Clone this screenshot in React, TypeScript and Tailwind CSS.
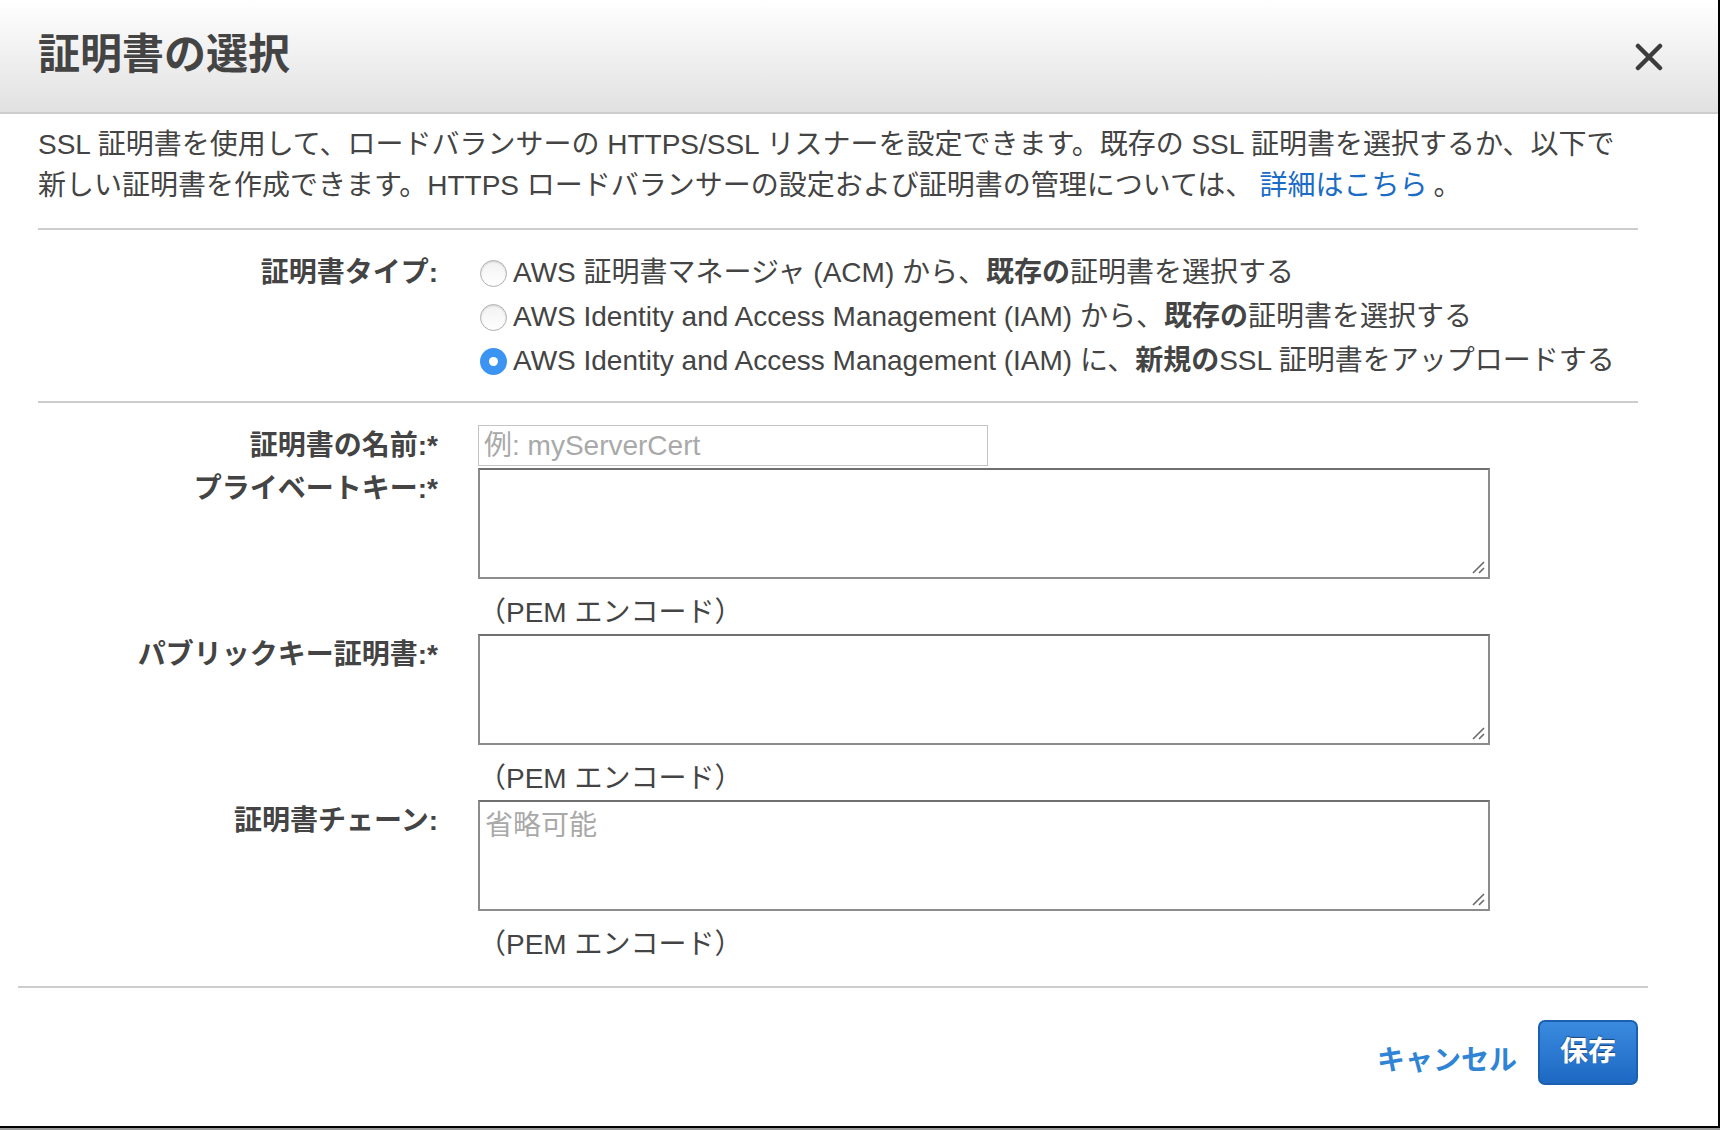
import { ReactNode } from "react";

const font = {
  fontFamily: '"Liberation Sans", "Noto Sans CJK JP", sans-serif',
};

interface radioopt {
  checked?: boolean;
  children: ReactNode;
}

const Radio = ({ checked, children }: radioopt) => (
  <div className="flex items-center h-[44px]">
    {checked ? (
      <span className="w-[27px] h-[27px] rounded-full bg-[#3b94f2] flex items-center justify-center shrink-0">
        <span className="w-[9px] h-[9px] rounded-full bg-white" />
      </span>
    ) : (
      <span className="w-[27px] h-[27px] rounded-full border border-[#b0b0b0] bg-gradient-to-b from-[#f2f2f2] to-white shadow-[inset_0_1px_2px_rgba(0,0,0,0.14)] shrink-0" />
    )}
    <span className="ml-[6px] whitespace-nowrap">{children}</span>
  </div>
);

const TextBox = ({ placeholder }: { placeholder?: string }) => (
  <div className="relative w-[1012px] h-[111px] border-2 border-[#8c8c8c] border-t-[#6f6f6f] bg-white">
    {placeholder && (
      <span className="absolute left-[5px] top-[3px] text-[#a9a9a9]">{placeholder}</span>
    )}
    {/* resize grip */}
    <svg className="absolute right-[3px] bottom-[3px]" width="14" height="14" viewBox="0 0 14 14">
      <path d="M2 13 L13 2 M8 13 L13 8" stroke="#6a6a6a" strokeWidth="1.6" />
    </svg>
  </div>
);

const Pem = () => (
  <p className="h-[41px] leading-[41px] mt-[13px] whitespace-nowrap">（PEM エンコード）</p>
);

const App = () => {
  return (
    <div className="w-[1720px] h-[1130px] bg-[#9a9a9a]" style={font}>
      <div className="w-[1720px] h-[1128px] bg-white border-r-2 border-b-2 border-black flex flex-col text-[#444] text-[28px]">
        {/* header */}
        <div className="h-[114px] shrink-0 bg-gradient-to-b from-white to-[#e1e1e1] border-b-2 border-[#cdcdcd] flex items-center justify-between pl-[38px] pr-[55px]">
          <h1 className="text-[42px] font-bold text-[#444] leading-none mb-[2px]">証明書の選択</h1>
          <svg width="28" height="28" viewBox="0 0 28 28" className="mt-[2px]">
            <path d="M3 3 L25 25 M25 3 L3 25" stroke="#3c3c3c" strokeWidth="4.5" strokeLinecap="round" />
          </svg>
        </div>

        <div className="px-[38px] w-[1676px]">
          {/* description */}
          <div className="pt-[10px] pb-[22px] leading-[41px] border-b-2 border-[#cdcdcd]">
            <p className="whitespace-nowrap">
              SSL 証明書を使用して、ロードバランサーの HTTPS/SSL リスナーを設定できます。既存の SSL 証明書を選択するか、以下で
            </p>
            <p className="whitespace-nowrap">
              新しい証明書を作成できます。HTTPS ロードバランサーの設定および証明書の管理については、
              <a className="text-[#1a6cc4] mx-[6px]">詳細はこちら</a>。
            </p>
          </div>

          {/* certificate type */}
          <div className="flex pt-[21px] pb-[18px] border-b-2 border-[#cdcdcd]">
            <div className="w-[400px] shrink-0 text-right font-bold h-[44px] leading-[44px]">証明書タイプ:</div>
            <div className="ml-[42px] flex flex-col">
              <Radio>
                AWS 証明書マネージャ (ACM) から、<b>既存の</b>証明書を選択する
              </Radio>
              <Radio>
                AWS Identity and Access Management (IAM) から、<b>既存の</b>証明書を選択する
              </Radio>
              <Radio checked>
                AWS Identity and Access Management (IAM) に、<b>新規の</b>SSL 証明書をアップロードする
              </Radio>
            </div>
          </div>
        </div>

        {/* form fields */}
        <div className="px-[38px] pt-[22px]">
          <div className="flex">
            <div className="w-[400px] shrink-0 text-right font-bold leading-[41px]">証明書の名前:*</div>
            <div className="ml-[40px]">
              <div className="w-[510px] h-[41px] border border-[#c4c4c4] bg-white flex items-center px-[5px] text-[#a9a9a9]">
                例: myServerCert
              </div>
            </div>
          </div>

          <div className="flex mt-[2px]">
            <div className="w-[400px] shrink-0 text-right font-bold leading-[41px]">プライベートキー:*</div>
            <div className="ml-[40px]">
              <TextBox />
              <Pem />
            </div>
          </div>

          <div className="flex mt-[1px]">
            <div className="w-[400px] shrink-0 text-right font-bold leading-[41px]">パブリックキー証明書:*</div>
            <div className="ml-[40px]">
              <TextBox />
              <Pem />
            </div>
          </div>

          <div className="flex mt-[1px]">
            <div className="w-[400px] shrink-0 text-right font-bold leading-[41px]">証明書チェーン:</div>
            <div className="ml-[40px]">
              <TextBox placeholder="省略可能" />
              <Pem />
            </div>
          </div>
        </div>

        {/* footer */}
        <div className="mx-[18px] w-[1630px] mt-[21px] border-t-2 border-[#cdcdcd]" />
        <div className="flex justify-end items-center pr-[80px] pt-[32px]">
          <a className="text-[#2f84d6] font-bold text-[28px] mt-[16px]">キャンセル</a>
          <button className="ml-[21px] w-[100px] h-[65px] rounded-[7px] border-2 border-[#1b5fb0] bg-gradient-to-b from-[#3a8be0] to-[#1c68c2] text-white font-bold text-[28px] [text-shadow:0_-1px_1px_rgba(0,0,0,0.45)] pb-[2px]">
            保存
          </button>
        </div>
      </div>
    </div>
  );
};

export default App;
